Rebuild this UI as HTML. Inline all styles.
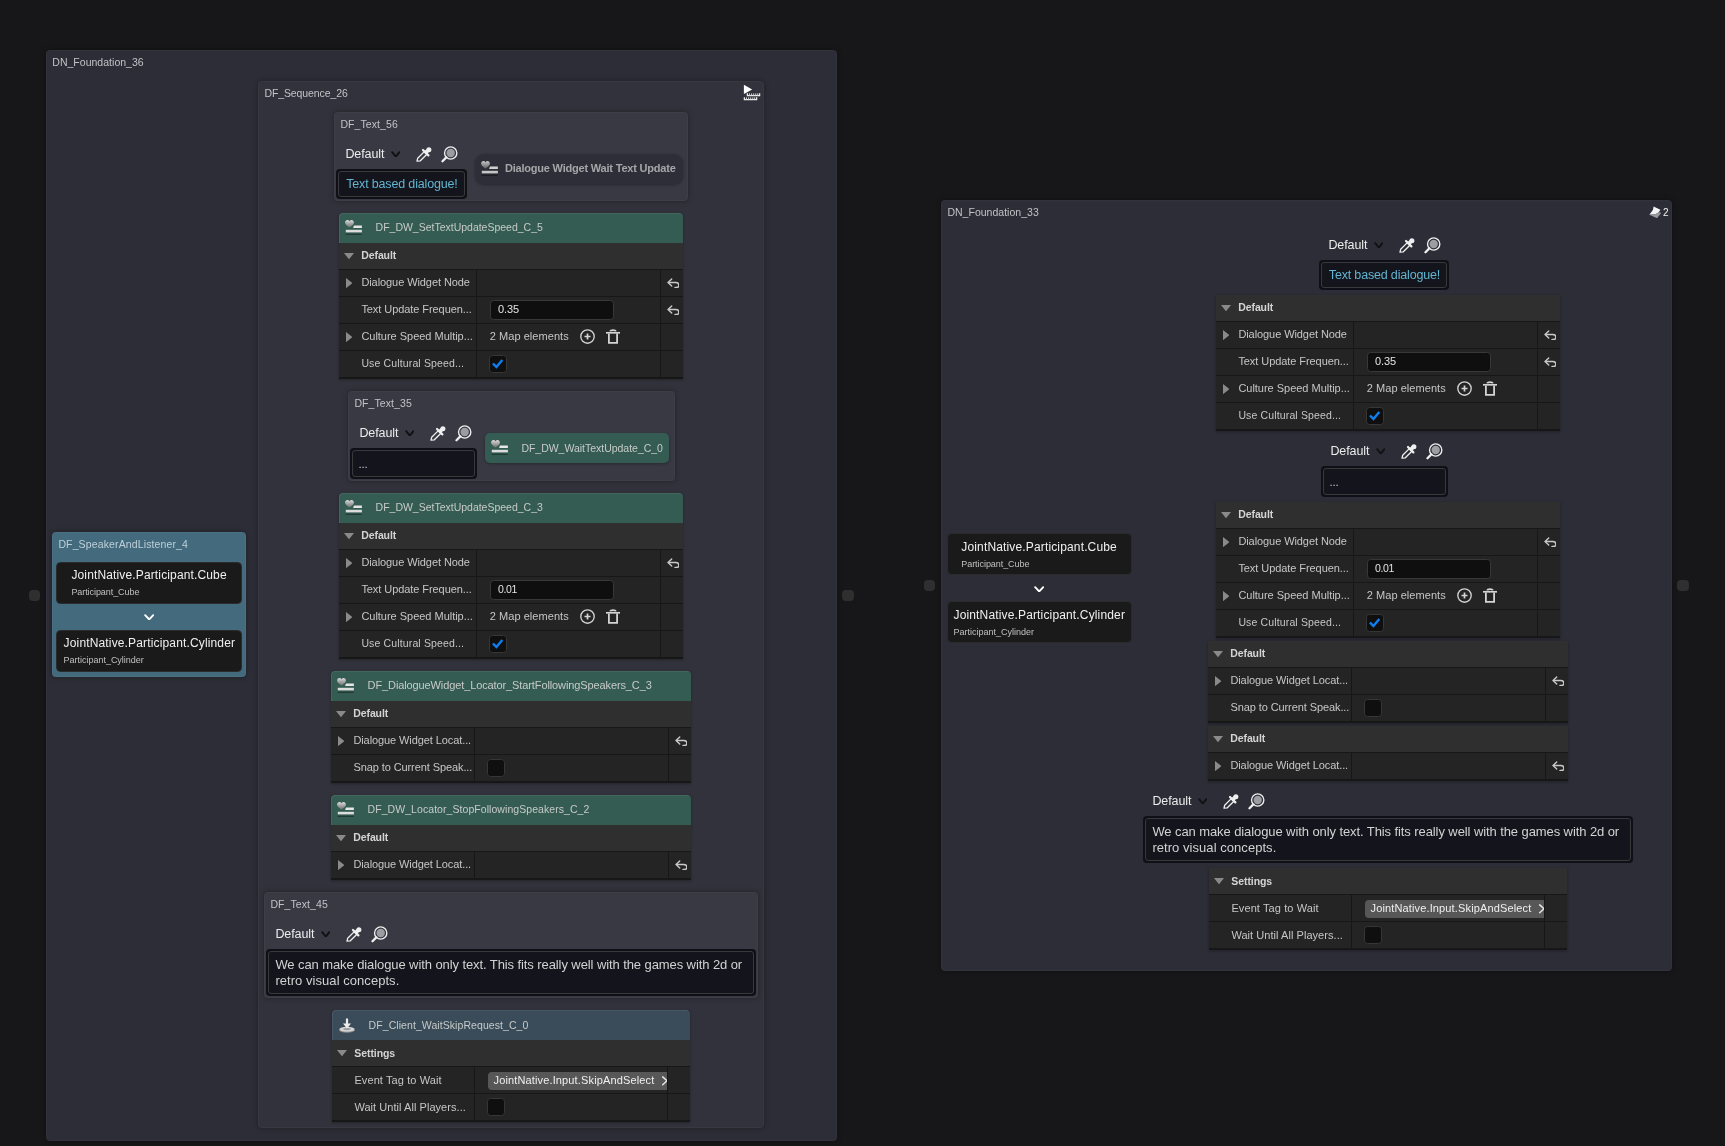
<!DOCTYPE html><html lang="en"><head><meta charset="utf-8"><title>Dialogue graph</title><style>
*{box-sizing:border-box;margin:0;padding:0}
html,body{width:1725px;height:1146px;overflow:hidden;background:#17171a}
body{position:relative;font-family:"Liberation Sans",Arial,sans-serif;color:#c4c4c4;font-size:11px}
#root{position:absolute;left:0;top:0;width:1725px;height:1146px;will-change:transform}
.abs{position:absolute}
.panel{position:absolute;border-radius:4px}
.t{position:absolute;white-space:nowrap;line-height:1}
.dp{position:absolute;background:#242424;overflow:hidden}
.dp .hd{position:absolute;left:0;right:0;top:0;height:30px}
.dp .cat{position:absolute;left:0;right:0;height:27px;background:#2f2f2f;border-bottom:1px solid #171717}
.dp .row{position:absolute;left:0;right:0;height:27px;background:#242424;border-bottom:1px solid #171717}
.dp .vd{position:absolute;width:1px;background:#171717}
.tb{position:absolute;background:#0f0f17;border-radius:4px}
.tb i{position:absolute;left:2px;top:2px;right:2px;bottom:2px;border:1px solid #39393b;border-radius:3px;background:#14141d;display:block}
.inp{position:absolute;background:#0f0f0f;border:1px solid #383838;border-radius:3.5px}
.chk{position:absolute;width:17.3px;height:17.3px;background:#0f0f0f;border:1px solid #363636;border-radius:3.5px}
.pin{position:absolute;height:11.3px;border-radius:4px;background:#2f2f30}
</style></head><body><div id="root">
<div class="pin" style="left:28.8px;top:589.9px;width:11.4px"></div>
<div class="pin" style="left:841.9px;top:589.9px;width:12.2px"></div>
<div class="pin" style="left:923.9px;top:579.9px;width:11.3px"></div>
<div class="pin" style="left:1677px;top:579.9px;width:12.1px"></div>
<div class="panel" style="left:46px;top:50px;width:791px;height:1091px;background:#2d2d37;border:1px solid #32323c;border-radius:3.5px;box-shadow:0 0 5px rgba(0,0,0,.35);"></div>
<div class="t" style="left:52.3px;top:57px;font-size:10.5px;color:#c2c2c6;letter-spacing:0.02px;">DN_Foundation_36</div>
<div class="panel" style="left:258px;top:81px;width:506px;height:1047px;background:#32323c;border:1px solid #383843;border-radius:3.5px;box-shadow:0 0 5px rgba(0,0,0,.35);"></div>
<div class="t" style="left:264.4px;top:88px;font-size:10.5px;color:#c2c2c6;letter-spacing:-0.09px;">DF_Sequence_26</div>
<svg class="abs" style="left:743px;top:84px;" width="18" height="17" viewBox="0 0 18 17"><path d="M0.9 0.8 L9.2 5.4 L0.9 10 Z" fill="#ffffff"/><path d="M4.4 9.2 V11.6 H16.6 V9.2" fill="none" stroke="#ececec" stroke-width="1.3"/><path d="M6.5 9.4 V11.6 M8.6 9.4 V11.6 M10.7 9.4 V11.6 M12.8 9.4 V11.6 M14.7 9.4 V11.6" stroke="#d0d0d0" stroke-width="1"/><path d="M1.4 13.2 V15.6 H13.6 V13.2" fill="none" stroke="#ececec" stroke-width="1.3"/><path d="M3.5 13.4 V15.6 M5.6 13.4 V15.6 M7.7 13.4 V15.6 M9.8 13.4 V15.6 M11.7 13.4 V15.6" stroke="#d0d0d0" stroke-width="1"/></svg>
<div class="panel" style="left:334px;top:112px;width:354px;height:89px;background:#393944;border:1px solid #3e3e49;border-radius:3.5px;box-shadow:0 0 5px rgba(0,0,0,.35);"></div>
<div class="t" style="left:340.4px;top:119px;font-size:10.5px;color:#c2c2c6;letter-spacing:0.09px;">DF_Text_56</div>
<div class="t" style="left:345.4px;top:148px;font-size:12.5px;color:#ececec;letter-spacing:-0.09px;">Default</div>
<svg class="abs" style="left:390.6px;top:150.6px;" width="9.6" height="6.8" viewBox="0 0 9.6 6.8"><path d="M1.2 1.2 L4.8 5.6 L8.4 1.2" fill="none" stroke="#111115" stroke-width="2" stroke-linecap="round" stroke-linejoin="round"/></svg>
<svg class="abs" style="left:416px;top:146.8px;" width="16" height="15" viewBox="0 0 16 15"><path d="M1 14.2 L1.7 11.2 L8.3 4.6 L10.9 7.2 L4.3 13.8 Z" fill="none" stroke="#efefef" stroke-width="1.3" stroke-linejoin="round"/><path d="M7 3 L12.4 8.4" stroke="#efefef" stroke-width="2.2" stroke-linecap="round"/><path d="M10.2 5.2 L12.4 3" stroke="#efefef" stroke-width="3.8" stroke-linecap="round"/><circle cx="12.9" cy="2.8" r="2.5" fill="#efefef"/></svg>
<svg class="abs" style="left:441.4px;top:145.8px;" width="17" height="17" viewBox="0 0 17 17"><circle cx="9.7" cy="7" r="6.15" fill="none" stroke="#efefef" stroke-width="1.35"/><circle cx="9.7" cy="7" r="4.2" fill="#9c9ca3"/><path d="M5.3 11.4 L1.5 15.2" stroke="#efefef" stroke-width="2.3" stroke-linecap="round"/></svg>
<div class="tb" style="left:336px;top:169px;width:131px;height:30px"><i></i></div>
<div class="t" style="left:346.2px;top:178px;font-size:12.5px;color:#62b5d0;letter-spacing:-0.16px;">Text based dialogue!</div>
<div class="abs" style="left:475px;top:154px;width:207.5px;height:29.6px;background:#2e2e38;border-radius:9px;box-shadow:0 1px 3px rgba(0,0,0,.32)"></div>
<svg class="abs" style="left:481px;top:161px;" width="17" height="16" viewBox="0 0 17 16"><defs><linearGradient id="hg1" x1="0" y1="0" x2="0" y2="1"><stop offset="0" stop-color="#c4c4c4"/><stop offset="1" stop-color="#616161"/></linearGradient></defs><path d="M4.5 7.6 C1.2 5.3 0.1 3.9 0.1 2.6 C0.1 1.1 1.2 0.1 2.4 0.1 C3.3 0.1 4 0.6 4.5 1.3 C5 0.6 5.7 0.1 6.6 0.1 C7.8 0.1 8.9 1.1 8.9 2.6 C8.9 3.9 7.8 5.3 4.5 7.6 Z" fill="url(#hg1)"/><path d="M8.9 5.6 H16.9 V7.9 H8.1 Z" fill="#cfcfcf"/><rect x="0.8" y="9.8" width="16.1" height="2.6" fill="#c6c6c6"/><rect x="0.5" y="13.7" width="16.2" height="1.3" fill="#000" fill-opacity=".36"/></svg>
<div class="t" style="left:504.9px;top:163px;font-size:11px;color:#a6a6a8;font-weight:700;letter-spacing:-0.2px;">Dialogue Widget Wait Text Update</div>
<div class="dp" style="left:339px;top:213px;width:344px;height:166px;border-radius:3px 3px 0 0;box-shadow:0 1px 3px rgba(0,0,0,.3)">
<div class="hd" style="background:#355c53;border-radius:3px 3px 0 0;box-shadow:inset 1px 1px 0 rgba(255,255,255,.07)"></div>
<div class="cat" style="top:30px"></div>
<div class="row" style="top:57px"></div>
<div class="row" style="top:84px"></div>
<div class="row" style="top:111px"></div>
<div class="row" style="top:138px"></div>
<div class="vd" style="left:137px;top:57px;height:108px"></div>
<div class="vd" style="left:321px;top:57px;height:108px"></div>
<div class="abs" style="left:0;right:0;bottom:0;height:2px;background:#171717"></div>
</div>
<svg class="abs" style="left:345.2px;top:220px;" width="17" height="16" viewBox="0 0 17 16"><defs><linearGradient id="hg2" x1="0" y1="0" x2="0" y2="1"><stop offset="0" stop-color="#dadada"/><stop offset="1" stop-color="#6c6c6c"/></linearGradient></defs><path d="M4.5 7.6 C1.2 5.3 0.1 3.9 0.1 2.6 C0.1 1.1 1.2 0.1 2.4 0.1 C3.3 0.1 4 0.6 4.5 1.3 C5 0.6 5.7 0.1 6.6 0.1 C7.8 0.1 8.9 1.1 8.9 2.6 C8.9 3.9 7.8 5.3 4.5 7.6 Z" fill="url(#hg2)"/><path d="M8.9 5.6 H16.9 V7.9 H8.1 Z" fill="#e6e6e6"/><rect x="0.8" y="9.8" width="16.1" height="2.6" fill="#dcdcdc"/><rect x="0.5" y="13.7" width="16.2" height="1.3" fill="#000" fill-opacity=".36"/></svg>
<div class="t" style="left:375.6px;top:222px;font-size:10.5px;color:#c6cac8;letter-spacing:-0.01px;">DF_DW_SetTextUpdateSpeed_C_5</div>
<svg class="abs" style="left:344px;top:253px;" width="10" height="6.3" viewBox="0 0 10 6.3"><path d="M0 0 H10 L5 6.3 Z" fill="#8a8a8a"/></svg>
<div class="t" style="left:361.3px;top:250px;font-size:10.5px;color:#d4d4d4;font-weight:700;letter-spacing:-0.11px;">Default</div>
<svg class="abs" style="left:345.8px;top:278px;" width="6.6" height="10.2" viewBox="0 0 6.6 10.2"><path d="M0 0 L6.6 5.1 L0 10.2 Z" fill="#8a8a8a"/></svg>
<div class="t" style="left:361.4px;top:277px;font-size:11px;color:#c6c6c6;letter-spacing:-0.08px;">Dialogue Widget Node</div>
<svg class="abs" style="left:666.7px;top:277.8px;" width="12.6" height="10.5" viewBox="0 0 12 10"><path d="M4.5 0.9 L1 4.3 L4.5 7.7" fill="none" stroke="#c8c8c8" stroke-width="1.35" stroke-linecap="round" stroke-linejoin="round"/><path d="M1.4 4.3 H8.2 C10.2 4.3 11.3 5.4 11.3 6.8 C11.3 8.2 10.2 9.1 8.6 9.1 H7.6" fill="none" stroke="#c8c8c8" stroke-width="1.35" stroke-linecap="round"/></svg>
<div class="t" style="left:361.4px;top:304px;font-size:11px;color:#c6c6c6;letter-spacing:-0.07px;">Text Update Frequen...</div>
<div class="inp" style="left:489.5px;top:300px;width:124.4px;height:19.6px"></div>
<div class="t" style="left:498px;top:304px;font-size:11px;color:#e4e4e4;letter-spacing:-0.1px;">0.35</div>
<svg class="abs" style="left:666.7px;top:304.8px;" width="12.6" height="10.5" viewBox="0 0 12 10"><path d="M4.5 0.9 L1 4.3 L4.5 7.7" fill="none" stroke="#c8c8c8" stroke-width="1.35" stroke-linecap="round" stroke-linejoin="round"/><path d="M1.4 4.3 H8.2 C10.2 4.3 11.3 5.4 11.3 6.8 C11.3 8.2 10.2 9.1 8.6 9.1 H7.6" fill="none" stroke="#c8c8c8" stroke-width="1.35" stroke-linecap="round"/></svg>
<svg class="abs" style="left:345.8px;top:332px;" width="6.6" height="10.2" viewBox="0 0 6.6 10.2"><path d="M0 0 L6.6 5.1 L0 10.2 Z" fill="#8a8a8a"/></svg>
<div class="t" style="left:361.4px;top:331px;font-size:11px;color:#c6c6c6;letter-spacing:-0.02px;">Culture Speed Multip...</div>
<div class="t" style="left:489.7px;top:331px;font-size:11px;color:#c6c6c6;letter-spacing:0.06px;">2 Map elements</div>
<svg class="abs" style="left:579.6px;top:329.3px;" width="15" height="15" viewBox="0 0 15 15"><circle cx="7.5" cy="7.5" r="6.7" fill="none" stroke="#d4d4d4" stroke-width="1.35"/><path d="M7.5 4.5 V10.5 M4.5 7.5 H10.5" stroke="#d4d4d4" stroke-width="1.7"/></svg>
<svg class="abs" style="left:606px;top:329px;" width="14" height="15" viewBox="0 0 14 15"><path d="M0 3.8 H14" stroke="#d4d4d4" stroke-width="1.7"/><path d="M4.3 2.4 C4.6 0.7 9.4 0.7 9.7 2.4" fill="none" stroke="#d4d4d4" stroke-width="1.7"/><path d="M2.9 4.4 V13.9 H11.1 V4.4" fill="none" stroke="#d4d4d4" stroke-width="1.8"/></svg>
<div class="t" style="left:361.4px;top:358px;font-size:10.5px;color:#c6c6c6;letter-spacing:0.14px;">Use Cultural Speed...</div>
<div class="chk" style="left:489.4px;top:355.4px"></div>
<svg class="abs" style="left:489.4px;top:355.4px;" width="17" height="17" viewBox="0 0 17 17"><path d="M3.9 8.5 L7.4 11.9 L13.3 4.9" fill="none" stroke="#0f7ff0" stroke-width="2.4"/></svg>
<div class="panel" style="left:348px;top:391px;width:327px;height:90px;background:#393944;border:1px solid #3e3e49;border-radius:3.5px;box-shadow:0 0 5px rgba(0,0,0,.35);"></div>
<div class="t" style="left:354.4px;top:398px;font-size:10.5px;color:#c2c2c6;letter-spacing:0.09px;">DF_Text_35</div>
<div class="t" style="left:359.4px;top:427px;font-size:12.5px;color:#ececec;letter-spacing:-0.09px;">Default</div>
<svg class="abs" style="left:404.6px;top:429.6px;" width="9.6" height="6.8" viewBox="0 0 9.6 6.8"><path d="M1.2 1.2 L4.8 5.6 L8.4 1.2" fill="none" stroke="#111115" stroke-width="2" stroke-linecap="round" stroke-linejoin="round"/></svg>
<svg class="abs" style="left:430px;top:425.8px;" width="16" height="15" viewBox="0 0 16 15"><path d="M1 14.2 L1.7 11.2 L8.3 4.6 L10.9 7.2 L4.3 13.8 Z" fill="none" stroke="#efefef" stroke-width="1.3" stroke-linejoin="round"/><path d="M7 3 L12.4 8.4" stroke="#efefef" stroke-width="2.2" stroke-linecap="round"/><path d="M10.2 5.2 L12.4 3" stroke="#efefef" stroke-width="3.8" stroke-linecap="round"/><circle cx="12.9" cy="2.8" r="2.5" fill="#efefef"/></svg>
<svg class="abs" style="left:455.4px;top:424.8px;" width="17" height="17" viewBox="0 0 17 17"><circle cx="9.7" cy="7" r="6.15" fill="none" stroke="#efefef" stroke-width="1.35"/><circle cx="9.7" cy="7" r="4.2" fill="#9c9ca3"/><path d="M5.3 11.4 L1.5 15.2" stroke="#efefef" stroke-width="2.3" stroke-linecap="round"/></svg>
<div class="tb" style="left:350px;top:448px;width:127px;height:31px"><i></i></div>
<div class="t" style="left:358.6px;top:459px;font-size:11.5px;color:#c8c8c8;letter-spacing:-0.2px;">...</div>
<div class="abs" style="left:485px;top:433px;width:184px;height:30px;background:#355c53;border-radius:5px;box-shadow:0 1px 3px rgba(0,0,0,.3)"></div>
<svg class="abs" style="left:490.9px;top:440px;" width="17" height="16" viewBox="0 0 17 16"><defs><linearGradient id="hg3" x1="0" y1="0" x2="0" y2="1"><stop offset="0" stop-color="#dadada"/><stop offset="1" stop-color="#6c6c6c"/></linearGradient></defs><path d="M4.5 7.6 C1.2 5.3 0.1 3.9 0.1 2.6 C0.1 1.1 1.2 0.1 2.4 0.1 C3.3 0.1 4 0.6 4.5 1.3 C5 0.6 5.7 0.1 6.6 0.1 C7.8 0.1 8.9 1.1 8.9 2.6 C8.9 3.9 7.8 5.3 4.5 7.6 Z" fill="url(#hg3)"/><path d="M8.9 5.6 H16.9 V7.9 H8.1 Z" fill="#e6e6e6"/><rect x="0.8" y="9.8" width="16.1" height="2.6" fill="#dcdcdc"/><rect x="0.5" y="13.7" width="16.2" height="1.3" fill="#000" fill-opacity=".36"/></svg>
<div class="t" style="left:521.4px;top:443px;font-size:10.5px;color:#c6cac8;letter-spacing:-0.02px;">DF_DW_WaitTextUpdate_C_0</div>
<div class="dp" style="left:339px;top:493px;width:344px;height:166px;border-radius:3px 3px 0 0;box-shadow:0 1px 3px rgba(0,0,0,.3)">
<div class="hd" style="background:#355c53;border-radius:3px 3px 0 0;box-shadow:inset 1px 1px 0 rgba(255,255,255,.07)"></div>
<div class="cat" style="top:30px"></div>
<div class="row" style="top:57px"></div>
<div class="row" style="top:84px"></div>
<div class="row" style="top:111px"></div>
<div class="row" style="top:138px"></div>
<div class="vd" style="left:137px;top:57px;height:108px"></div>
<div class="vd" style="left:321px;top:57px;height:108px"></div>
<div class="abs" style="left:0;right:0;bottom:0;height:2px;background:#171717"></div>
</div>
<svg class="abs" style="left:345.2px;top:500px;" width="17" height="16" viewBox="0 0 17 16"><defs><linearGradient id="hg4" x1="0" y1="0" x2="0" y2="1"><stop offset="0" stop-color="#dadada"/><stop offset="1" stop-color="#6c6c6c"/></linearGradient></defs><path d="M4.5 7.6 C1.2 5.3 0.1 3.9 0.1 2.6 C0.1 1.1 1.2 0.1 2.4 0.1 C3.3 0.1 4 0.6 4.5 1.3 C5 0.6 5.7 0.1 6.6 0.1 C7.8 0.1 8.9 1.1 8.9 2.6 C8.9 3.9 7.8 5.3 4.5 7.6 Z" fill="url(#hg4)"/><path d="M8.9 5.6 H16.9 V7.9 H8.1 Z" fill="#e6e6e6"/><rect x="0.8" y="9.8" width="16.1" height="2.6" fill="#dcdcdc"/><rect x="0.5" y="13.7" width="16.2" height="1.3" fill="#000" fill-opacity=".36"/></svg>
<div class="t" style="left:375.6px;top:502px;font-size:10.5px;color:#c6cac8;letter-spacing:-0.01px;">DF_DW_SetTextUpdateSpeed_C_3</div>
<svg class="abs" style="left:344px;top:533px;" width="10" height="6.3" viewBox="0 0 10 6.3"><path d="M0 0 H10 L5 6.3 Z" fill="#8a8a8a"/></svg>
<div class="t" style="left:361.3px;top:530px;font-size:10.5px;color:#d4d4d4;font-weight:700;letter-spacing:-0.11px;">Default</div>
<svg class="abs" style="left:345.8px;top:558px;" width="6.6" height="10.2" viewBox="0 0 6.6 10.2"><path d="M0 0 L6.6 5.1 L0 10.2 Z" fill="#8a8a8a"/></svg>
<div class="t" style="left:361.4px;top:557px;font-size:11px;color:#c6c6c6;letter-spacing:-0.08px;">Dialogue Widget Node</div>
<svg class="abs" style="left:666.7px;top:557.8px;" width="12.6" height="10.5" viewBox="0 0 12 10"><path d="M4.5 0.9 L1 4.3 L4.5 7.7" fill="none" stroke="#c8c8c8" stroke-width="1.35" stroke-linecap="round" stroke-linejoin="round"/><path d="M1.4 4.3 H8.2 C10.2 4.3 11.3 5.4 11.3 6.8 C11.3 8.2 10.2 9.1 8.6 9.1 H7.6" fill="none" stroke="#c8c8c8" stroke-width="1.35" stroke-linecap="round"/></svg>
<div class="t" style="left:361.4px;top:584px;font-size:11px;color:#c6c6c6;letter-spacing:-0.07px;">Text Update Frequen...</div>
<div class="inp" style="left:489.5px;top:580px;width:124.4px;height:19.6px"></div>
<div class="t" style="left:498px;top:584px;font-size:10.5px;color:#e4e4e4;letter-spacing:-0.33px;">0.01</div>
<svg class="abs" style="left:345.8px;top:612px;" width="6.6" height="10.2" viewBox="0 0 6.6 10.2"><path d="M0 0 L6.6 5.1 L0 10.2 Z" fill="#8a8a8a"/></svg>
<div class="t" style="left:361.4px;top:611px;font-size:11px;color:#c6c6c6;letter-spacing:-0.02px;">Culture Speed Multip...</div>
<div class="t" style="left:489.7px;top:611px;font-size:11px;color:#c6c6c6;letter-spacing:0.06px;">2 Map elements</div>
<svg class="abs" style="left:579.6px;top:609.3px;" width="15" height="15" viewBox="0 0 15 15"><circle cx="7.5" cy="7.5" r="6.7" fill="none" stroke="#d4d4d4" stroke-width="1.35"/><path d="M7.5 4.5 V10.5 M4.5 7.5 H10.5" stroke="#d4d4d4" stroke-width="1.7"/></svg>
<svg class="abs" style="left:606px;top:609px;" width="14" height="15" viewBox="0 0 14 15"><path d="M0 3.8 H14" stroke="#d4d4d4" stroke-width="1.7"/><path d="M4.3 2.4 C4.6 0.7 9.4 0.7 9.7 2.4" fill="none" stroke="#d4d4d4" stroke-width="1.7"/><path d="M2.9 4.4 V13.9 H11.1 V4.4" fill="none" stroke="#d4d4d4" stroke-width="1.8"/></svg>
<div class="t" style="left:361.4px;top:638px;font-size:10.5px;color:#c6c6c6;letter-spacing:0.14px;">Use Cultural Speed...</div>
<div class="chk" style="left:489.4px;top:635.4px"></div>
<svg class="abs" style="left:489.4px;top:635.4px;" width="17" height="17" viewBox="0 0 17 17"><path d="M3.9 8.5 L7.4 11.9 L13.3 4.9" fill="none" stroke="#0f7ff0" stroke-width="2.4"/></svg>
<div class="dp" style="left:331px;top:671px;width:360px;height:112px;border-radius:3px 3px 0 0;box-shadow:0 1px 3px rgba(0,0,0,.3)">
<div class="hd" style="background:#355c53;border-radius:3px 3px 0 0;box-shadow:inset 1px 1px 0 rgba(255,255,255,.07)"></div>
<div class="cat" style="top:30px"></div>
<div class="row" style="top:57px"></div>
<div class="row" style="top:84px"></div>
<div class="vd" style="left:143px;top:57px;height:54px"></div>
<div class="vd" style="left:337px;top:57px;height:54px"></div>
<div class="abs" style="left:0;right:0;bottom:0;height:2px;background:#171717"></div>
</div>
<svg class="abs" style="left:337.2px;top:678px;" width="17" height="16" viewBox="0 0 17 16"><defs><linearGradient id="hg5" x1="0" y1="0" x2="0" y2="1"><stop offset="0" stop-color="#dadada"/><stop offset="1" stop-color="#6c6c6c"/></linearGradient></defs><path d="M4.5 7.6 C1.2 5.3 0.1 3.9 0.1 2.6 C0.1 1.1 1.2 0.1 2.4 0.1 C3.3 0.1 4 0.6 4.5 1.3 C5 0.6 5.7 0.1 6.6 0.1 C7.8 0.1 8.9 1.1 8.9 2.6 C8.9 3.9 7.8 5.3 4.5 7.6 Z" fill="url(#hg5)"/><path d="M8.9 5.6 H16.9 V7.9 H8.1 Z" fill="#e6e6e6"/><rect x="0.8" y="9.8" width="16.1" height="2.6" fill="#dcdcdc"/><rect x="0.5" y="13.7" width="16.2" height="1.3" fill="#000" fill-opacity=".36"/></svg>
<div class="t" style="left:367.6px;top:680px;font-size:11px;color:#c6cac8;letter-spacing:-0.11px;">DF_DialogueWidget_Locator_StartFollowingSpeakers_C_3</div>
<svg class="abs" style="left:336px;top:711px;" width="10" height="6.3" viewBox="0 0 10 6.3"><path d="M0 0 H10 L5 6.3 Z" fill="#8a8a8a"/></svg>
<div class="t" style="left:353.3px;top:708px;font-size:10.5px;color:#d4d4d4;font-weight:700;letter-spacing:-0.11px;">Default</div>
<svg class="abs" style="left:337.8px;top:736px;" width="6.6" height="10.2" viewBox="0 0 6.6 10.2"><path d="M0 0 L6.6 5.1 L0 10.2 Z" fill="#8a8a8a"/></svg>
<div class="t" style="left:353.4px;top:735px;font-size:11px;color:#c6c6c6;letter-spacing:-0.09px;">Dialogue Widget Locat...</div>
<svg class="abs" style="left:674.7px;top:735.8px;" width="12.6" height="10.5" viewBox="0 0 12 10"><path d="M4.5 0.9 L1 4.3 L4.5 7.7" fill="none" stroke="#c8c8c8" stroke-width="1.35" stroke-linecap="round" stroke-linejoin="round"/><path d="M1.4 4.3 H8.2 C10.2 4.3 11.3 5.4 11.3 6.8 C11.3 8.2 10.2 9.1 8.6 9.1 H7.6" fill="none" stroke="#c8c8c8" stroke-width="1.35" stroke-linecap="round"/></svg>
<div class="t" style="left:353.4px;top:762px;font-size:11px;color:#c6c6c6;letter-spacing:-0.09px;">Snap to Current Speak...</div>
<div class="chk" style="left:487.4px;top:759.4px"></div>
<div class="dp" style="left:331px;top:795px;width:360px;height:85px;border-radius:3px 3px 0 0;box-shadow:0 1px 3px rgba(0,0,0,.3)">
<div class="hd" style="background:#355c53;border-radius:3px 3px 0 0;box-shadow:inset 1px 1px 0 rgba(255,255,255,.07)"></div>
<div class="cat" style="top:30px"></div>
<div class="row" style="top:57px"></div>
<div class="vd" style="left:143px;top:57px;height:27px"></div>
<div class="vd" style="left:337px;top:57px;height:27px"></div>
<div class="abs" style="left:0;right:0;bottom:0;height:2px;background:#171717"></div>
</div>
<svg class="abs" style="left:337.2px;top:802px;" width="17" height="16" viewBox="0 0 17 16"><defs><linearGradient id="hg6" x1="0" y1="0" x2="0" y2="1"><stop offset="0" stop-color="#dadada"/><stop offset="1" stop-color="#6c6c6c"/></linearGradient></defs><path d="M4.5 7.6 C1.2 5.3 0.1 3.9 0.1 2.6 C0.1 1.1 1.2 0.1 2.4 0.1 C3.3 0.1 4 0.6 4.5 1.3 C5 0.6 5.7 0.1 6.6 0.1 C7.8 0.1 8.9 1.1 8.9 2.6 C8.9 3.9 7.8 5.3 4.5 7.6 Z" fill="url(#hg6)"/><path d="M8.9 5.6 H16.9 V7.9 H8.1 Z" fill="#e6e6e6"/><rect x="0.8" y="9.8" width="16.1" height="2.6" fill="#dcdcdc"/><rect x="0.5" y="13.7" width="16.2" height="1.3" fill="#000" fill-opacity=".36"/></svg>
<div class="t" style="left:367.6px;top:804px;font-size:10.5px;color:#c6cac8;letter-spacing:0.06px;">DF_DW_Locator_StopFollowingSpeakers_C_2</div>
<svg class="abs" style="left:336px;top:835px;" width="10" height="6.3" viewBox="0 0 10 6.3"><path d="M0 0 H10 L5 6.3 Z" fill="#8a8a8a"/></svg>
<div class="t" style="left:353.3px;top:832px;font-size:10.5px;color:#d4d4d4;font-weight:700;letter-spacing:-0.11px;">Default</div>
<svg class="abs" style="left:337.8px;top:860px;" width="6.6" height="10.2" viewBox="0 0 6.6 10.2"><path d="M0 0 L6.6 5.1 L0 10.2 Z" fill="#8a8a8a"/></svg>
<div class="t" style="left:353.4px;top:859px;font-size:11px;color:#c6c6c6;letter-spacing:-0.09px;">Dialogue Widget Locat...</div>
<svg class="abs" style="left:674.7px;top:859.8px;" width="12.6" height="10.5" viewBox="0 0 12 10"><path d="M4.5 0.9 L1 4.3 L4.5 7.7" fill="none" stroke="#c8c8c8" stroke-width="1.35" stroke-linecap="round" stroke-linejoin="round"/><path d="M1.4 4.3 H8.2 C10.2 4.3 11.3 5.4 11.3 6.8 C11.3 8.2 10.2 9.1 8.6 9.1 H7.6" fill="none" stroke="#c8c8c8" stroke-width="1.35" stroke-linecap="round"/></svg>
<div class="panel" style="left:264px;top:892px;width:494px;height:106px;background:#393944;border:1px solid #3e3e49;border-radius:3.5px;box-shadow:0 0 5px rgba(0,0,0,.35);"></div>
<div class="t" style="left:270.4px;top:899px;font-size:10.5px;color:#c2c2c6;letter-spacing:0.09px;">DF_Text_45</div>
<div class="t" style="left:275.4px;top:928px;font-size:12.5px;color:#ececec;letter-spacing:-0.09px;">Default</div>
<svg class="abs" style="left:320.6px;top:930.6px;" width="9.6" height="6.8" viewBox="0 0 9.6 6.8"><path d="M1.2 1.2 L4.8 5.6 L8.4 1.2" fill="none" stroke="#111115" stroke-width="2" stroke-linecap="round" stroke-linejoin="round"/></svg>
<svg class="abs" style="left:346px;top:926.8px;" width="16" height="15" viewBox="0 0 16 15"><path d="M1 14.2 L1.7 11.2 L8.3 4.6 L10.9 7.2 L4.3 13.8 Z" fill="none" stroke="#efefef" stroke-width="1.3" stroke-linejoin="round"/><path d="M7 3 L12.4 8.4" stroke="#efefef" stroke-width="2.2" stroke-linecap="round"/><path d="M10.2 5.2 L12.4 3" stroke="#efefef" stroke-width="3.8" stroke-linecap="round"/><circle cx="12.9" cy="2.8" r="2.5" fill="#efefef"/></svg>
<svg class="abs" style="left:371.4px;top:925.8px;" width="17" height="17" viewBox="0 0 17 17"><circle cx="9.7" cy="7" r="6.15" fill="none" stroke="#efefef" stroke-width="1.35"/><circle cx="9.7" cy="7" r="4.2" fill="#9c9ca3"/><path d="M5.3 11.4 L1.5 15.2" stroke="#efefef" stroke-width="2.3" stroke-linecap="round"/></svg>
<div class="tb" style="left:266px;top:949px;width:490px;height:46.7px"><i></i></div>
<div class="t" style="left:275.4px;top:958px;font-size:13px;color:#d2d2d2;letter-spacing:-0.09px;">We can make dialogue with only text. This fits really well with the games with 2d or</div>
<div class="t" style="left:275.4px;top:974px;font-size:13px;color:#d2d2d2;letter-spacing:0.05px;">retro visual concepts.</div>
<div class="dp" style="left:332px;top:1010px;width:358px;height:112px;border-radius:3px 3px 0 0;box-shadow:0 1px 3px rgba(0,0,0,.3)">
<div class="hd" style="background:#3a4c5a;border-radius:3px 3px 0 0;box-shadow:inset 1px 1px 0 rgba(255,255,255,.07)"></div>
<div class="cat" style="top:30px"></div>
<div class="row" style="top:57px"></div>
<div class="row" style="top:84px"></div>
<div class="vd" style="left:142px;top:57px;height:54px"></div>
<div class="vd" style="left:335px;top:57px;height:54px"></div>
<div class="abs" style="left:0;right:0;bottom:0;height:2px;background:#171717"></div>
</div>
<svg class="abs" style="left:339px;top:1017.6px;" width="16" height="15" viewBox="0 0 16 15"><ellipse cx="8" cy="12.2" rx="7.6" ry="2.6" fill="#8e8e8e"/><ellipse cx="8" cy="11.2" rx="7.6" ry="2.5" fill="#d4d4d4"/><ellipse cx="8" cy="11.1" rx="3.6" ry="1.1" fill="#9a9a9a"/><path d="M6.9 0.4 H9.1 V5.6 H12 L8 10.6 L4 5.6 H6.9 Z" fill="#ececec"/></svg>
<div class="t" style="left:368.6px;top:1020px;font-size:10.5px;color:#c6cac8;letter-spacing:0.07px;">DF_Client_WaitSkipRequest_C_0</div>
<svg class="abs" style="left:337px;top:1050px;" width="10" height="6.3" viewBox="0 0 10 6.3"><path d="M0 0 H10 L5 6.3 Z" fill="#8a8a8a"/></svg>
<div class="t" style="left:354.3px;top:1048px;font-size:10.5px;color:#d4d4d4;font-weight:700;letter-spacing:-0.08px;">Settings</div>
<div class="t" style="left:354.4px;top:1075px;font-size:11px;color:#c6c6c6;letter-spacing:0.1px;">Event Tag to Wait</div>
<div class="abs" style="left:488px;top:1072px;width:179px;height:18px;background:#575757;border-radius:4px 0 0 4px"></div>
<div class="t" style="left:493.5px;top:1075px;font-size:11px;color:#f0f0f0;letter-spacing:0.14px;">JointNative.Input.SkipAndSelect</div>
<svg class="abs" style="left:660.8px;top:1076.4px;" width="6.2" height="9.6" viewBox="0 0 6.2 9.6"><path d="M1.7 0.9 L6 4.8 L1.7 8.7" fill="none" stroke="#e6e6e6" stroke-width="1.5" stroke-linecap="round" stroke-linejoin="round"/></svg>
<div class="t" style="left:354.4px;top:1102px;font-size:11px;color:#c6c6c6;letter-spacing:0.05px;">Wait Until All Players...</div>
<div class="chk" style="left:487.4px;top:1098.4px"></div>
<div class="panel" style="left:52px;top:532px;width:194px;height:145px;background:#446b7d;border:1px solid #4a7183;border-radius:3.5px;box-shadow:0 0 5px rgba(0,0,0,.35);"></div>
<div class="t" style="left:58.4px;top:539px;font-size:10.5px;color:#bdd0d8;letter-spacing:0.13px;">DF_SpeakerAndListener_4</div>
<div class="abs" style="left:56px;top:561.5px;width:186px;height:42px;background:#1a1a1a;border-radius:4.5px;border:1px solid #2b2b2b;"></div>
<div class="t" style="left:71.4px;top:569px;font-size:12px;color:#f0f0f0;letter-spacing:0.14px;">JointNative.Participant.Cube</div>
<div class="t" style="left:71.4px;top:588px;font-size:9px;color:#c0c0c0;letter-spacing:-0.07px;">Participant_Cube</div>
<svg class="abs" style="left:143.8px;top:613.8px;" width="10.4" height="6.6" viewBox="0 0 10.4 6.6"><path d="M1.15 1.15 L5.2 5.449999999999999 L9.250000000000002 1.15" fill="none" stroke="#ffffff" stroke-width="1.9" stroke-linecap="round" stroke-linejoin="round"/></svg>
<div class="abs" style="left:56px;top:629.5px;width:186px;height:42px;background:#1a1a1a;border-radius:4.5px;border:1px solid #2b2b2b;"></div>
<div class="t" style="left:63.6px;top:637px;font-size:12px;color:#f0f0f0;letter-spacing:0.15px;">JointNative.Participant.Cylinder</div>
<div class="t" style="left:63.6px;top:656px;font-size:9px;color:#c0c0c0;letter-spacing:-0.02px;">Participant_Cylinder</div>
<div class="panel" style="left:941px;top:200px;width:731px;height:771px;background:#2d2d37;border:1px solid #32323c;border-radius:3.5px;box-shadow:0 0 5px rgba(0,0,0,.35);"></div>
<div class="t" style="left:947.4px;top:207px;font-size:10.5px;color:#c2c2c6;letter-spacing:0.02px;">DN_Foundation_33</div>
<svg class="abs" style="left:1648.6px;top:205.8px;" width="12.6" height="12.6" viewBox="0 0 12.6 12.6"><path d="M4.6 0.4 L11.4 3.7 L9.8 6.3 L6.5 8.2 L0.4 8.7 L4 3.8 Z" fill="#f4f4f4"/><path d="M0.4 8.7 L6.5 8.2 L9.8 6.3 L12.2 6.9 L8 12.2 Z" fill="#9a9a9e"/></svg>
<div class="t" style="left:1663.1px;top:208px;font-size:10px;color:#f2f2f2;">2</div>
<div class="t" style="left:1328.4px;top:239px;font-size:12.5px;color:#ececec;letter-spacing:-0.09px;">Default</div>
<svg class="abs" style="left:1373.6px;top:241.6px;" width="9.6" height="6.8" viewBox="0 0 9.6 6.8"><path d="M1.2 1.2 L4.8 5.6 L8.4 1.2" fill="none" stroke="#111115" stroke-width="2" stroke-linecap="round" stroke-linejoin="round"/></svg>
<svg class="abs" style="left:1399px;top:237.8px;" width="16" height="15" viewBox="0 0 16 15"><path d="M1 14.2 L1.7 11.2 L8.3 4.6 L10.9 7.2 L4.3 13.8 Z" fill="none" stroke="#efefef" stroke-width="1.3" stroke-linejoin="round"/><path d="M7 3 L12.4 8.4" stroke="#efefef" stroke-width="2.2" stroke-linecap="round"/><path d="M10.2 5.2 L12.4 3" stroke="#efefef" stroke-width="3.8" stroke-linecap="round"/><circle cx="12.9" cy="2.8" r="2.5" fill="#efefef"/></svg>
<svg class="abs" style="left:1424.4px;top:236.8px;" width="17" height="17" viewBox="0 0 17 17"><circle cx="9.7" cy="7" r="6.15" fill="none" stroke="#efefef" stroke-width="1.35"/><circle cx="9.7" cy="7" r="4.2" fill="#9c9ca3"/><path d="M5.3 11.4 L1.5 15.2" stroke="#efefef" stroke-width="2.3" stroke-linecap="round"/></svg>
<div class="tb" style="left:1319px;top:260px;width:130px;height:30px"><i></i></div>
<div class="t" style="left:1328.8px;top:269px;font-size:12.5px;color:#62b5d0;letter-spacing:-0.17px;">Text based dialogue!</div>
<div class="dp" style="left:1216px;top:295px;width:344px;height:136px;border-radius:0;box-shadow:0 1px 3px rgba(0,0,0,.3)">
<div class="cat" style="top:0px"></div>
<div class="row" style="top:27px"></div>
<div class="row" style="top:54px"></div>
<div class="row" style="top:81px"></div>
<div class="row" style="top:108px"></div>
<div class="vd" style="left:137px;top:27px;height:108px"></div>
<div class="vd" style="left:321px;top:27px;height:108px"></div>
<div class="abs" style="left:0;right:0;bottom:0;height:2px;background:#171717"></div>
</div>
<svg class="abs" style="left:1221px;top:305px;" width="10" height="6.3" viewBox="0 0 10 6.3"><path d="M0 0 H10 L5 6.3 Z" fill="#8a8a8a"/></svg>
<div class="t" style="left:1238.3px;top:302px;font-size:10.5px;color:#d4d4d4;font-weight:700;letter-spacing:-0.11px;">Default</div>
<svg class="abs" style="left:1222.8px;top:330px;" width="6.6" height="10.2" viewBox="0 0 6.6 10.2"><path d="M0 0 L6.6 5.1 L0 10.2 Z" fill="#8a8a8a"/></svg>
<div class="t" style="left:1238.4px;top:329px;font-size:11px;color:#c6c6c6;letter-spacing:-0.08px;">Dialogue Widget Node</div>
<svg class="abs" style="left:1543.7px;top:329.8px;" width="12.6" height="10.5" viewBox="0 0 12 10"><path d="M4.5 0.9 L1 4.3 L4.5 7.7" fill="none" stroke="#c8c8c8" stroke-width="1.35" stroke-linecap="round" stroke-linejoin="round"/><path d="M1.4 4.3 H8.2 C10.2 4.3 11.3 5.4 11.3 6.8 C11.3 8.2 10.2 9.1 8.6 9.1 H7.6" fill="none" stroke="#c8c8c8" stroke-width="1.35" stroke-linecap="round"/></svg>
<div class="t" style="left:1238.4px;top:356px;font-size:11px;color:#c6c6c6;letter-spacing:-0.07px;">Text Update Frequen...</div>
<div class="inp" style="left:1366.5px;top:352px;width:124.4px;height:19.6px"></div>
<div class="t" style="left:1375px;top:356px;font-size:11px;color:#e4e4e4;letter-spacing:-0.1px;">0.35</div>
<svg class="abs" style="left:1543.7px;top:356.8px;" width="12.6" height="10.5" viewBox="0 0 12 10"><path d="M4.5 0.9 L1 4.3 L4.5 7.7" fill="none" stroke="#c8c8c8" stroke-width="1.35" stroke-linecap="round" stroke-linejoin="round"/><path d="M1.4 4.3 H8.2 C10.2 4.3 11.3 5.4 11.3 6.8 C11.3 8.2 10.2 9.1 8.6 9.1 H7.6" fill="none" stroke="#c8c8c8" stroke-width="1.35" stroke-linecap="round"/></svg>
<svg class="abs" style="left:1222.8px;top:384px;" width="6.6" height="10.2" viewBox="0 0 6.6 10.2"><path d="M0 0 L6.6 5.1 L0 10.2 Z" fill="#8a8a8a"/></svg>
<div class="t" style="left:1238.4px;top:383px;font-size:11px;color:#c6c6c6;letter-spacing:-0.02px;">Culture Speed Multip...</div>
<div class="t" style="left:1366.7px;top:383px;font-size:11px;color:#c6c6c6;letter-spacing:0.06px;">2 Map elements</div>
<svg class="abs" style="left:1456.6px;top:381.3px;" width="15" height="15" viewBox="0 0 15 15"><circle cx="7.5" cy="7.5" r="6.7" fill="none" stroke="#d4d4d4" stroke-width="1.35"/><path d="M7.5 4.5 V10.5 M4.5 7.5 H10.5" stroke="#d4d4d4" stroke-width="1.7"/></svg>
<svg class="abs" style="left:1483px;top:381px;" width="14" height="15" viewBox="0 0 14 15"><path d="M0 3.8 H14" stroke="#d4d4d4" stroke-width="1.7"/><path d="M4.3 2.4 C4.6 0.7 9.4 0.7 9.7 2.4" fill="none" stroke="#d4d4d4" stroke-width="1.7"/><path d="M2.9 4.4 V13.9 H11.1 V4.4" fill="none" stroke="#d4d4d4" stroke-width="1.8"/></svg>
<div class="t" style="left:1238.4px;top:410px;font-size:10.5px;color:#c6c6c6;letter-spacing:0.14px;">Use Cultural Speed...</div>
<div class="chk" style="left:1366.4px;top:407.4px"></div>
<svg class="abs" style="left:1366.4px;top:407.4px;" width="17" height="17" viewBox="0 0 17 17"><path d="M3.9 8.5 L7.4 11.9 L13.3 4.9" fill="none" stroke="#0f7ff0" stroke-width="2.4"/></svg>
<div class="t" style="left:1330.4px;top:445px;font-size:12.5px;color:#ececec;letter-spacing:-0.09px;">Default</div>
<svg class="abs" style="left:1375.6px;top:447.6px;" width="9.6" height="6.8" viewBox="0 0 9.6 6.8"><path d="M1.2 1.2 L4.8 5.6 L8.4 1.2" fill="none" stroke="#111115" stroke-width="2" stroke-linecap="round" stroke-linejoin="round"/></svg>
<svg class="abs" style="left:1401px;top:443.8px;" width="16" height="15" viewBox="0 0 16 15"><path d="M1 14.2 L1.7 11.2 L8.3 4.6 L10.9 7.2 L4.3 13.8 Z" fill="none" stroke="#efefef" stroke-width="1.3" stroke-linejoin="round"/><path d="M7 3 L12.4 8.4" stroke="#efefef" stroke-width="2.2" stroke-linecap="round"/><path d="M10.2 5.2 L12.4 3" stroke="#efefef" stroke-width="3.8" stroke-linecap="round"/><circle cx="12.9" cy="2.8" r="2.5" fill="#efefef"/></svg>
<svg class="abs" style="left:1426.4px;top:442.8px;" width="17" height="17" viewBox="0 0 17 17"><circle cx="9.7" cy="7" r="6.15" fill="none" stroke="#efefef" stroke-width="1.35"/><circle cx="9.7" cy="7" r="4.2" fill="#9c9ca3"/><path d="M5.3 11.4 L1.5 15.2" stroke="#efefef" stroke-width="2.3" stroke-linecap="round"/></svg>
<div class="tb" style="left:1321px;top:466px;width:127px;height:31px"><i></i></div>
<div class="t" style="left:1329.6px;top:477px;font-size:11.5px;color:#c8c8c8;letter-spacing:-0.2px;">...</div>
<div class="dp" style="left:1216px;top:502px;width:344px;height:136px;border-radius:0;box-shadow:0 1px 3px rgba(0,0,0,.3)">
<div class="cat" style="top:0px"></div>
<div class="row" style="top:27px"></div>
<div class="row" style="top:54px"></div>
<div class="row" style="top:81px"></div>
<div class="row" style="top:108px"></div>
<div class="vd" style="left:137px;top:27px;height:108px"></div>
<div class="vd" style="left:321px;top:27px;height:108px"></div>
<div class="abs" style="left:0;right:0;bottom:0;height:2px;background:#171717"></div>
</div>
<svg class="abs" style="left:1221px;top:512px;" width="10" height="6.3" viewBox="0 0 10 6.3"><path d="M0 0 H10 L5 6.3 Z" fill="#8a8a8a"/></svg>
<div class="t" style="left:1238.3px;top:509px;font-size:10.5px;color:#d4d4d4;font-weight:700;letter-spacing:-0.11px;">Default</div>
<svg class="abs" style="left:1222.8px;top:537px;" width="6.6" height="10.2" viewBox="0 0 6.6 10.2"><path d="M0 0 L6.6 5.1 L0 10.2 Z" fill="#8a8a8a"/></svg>
<div class="t" style="left:1238.4px;top:536px;font-size:11px;color:#c6c6c6;letter-spacing:-0.08px;">Dialogue Widget Node</div>
<svg class="abs" style="left:1543.7px;top:536.8px;" width="12.6" height="10.5" viewBox="0 0 12 10"><path d="M4.5 0.9 L1 4.3 L4.5 7.7" fill="none" stroke="#c8c8c8" stroke-width="1.35" stroke-linecap="round" stroke-linejoin="round"/><path d="M1.4 4.3 H8.2 C10.2 4.3 11.3 5.4 11.3 6.8 C11.3 8.2 10.2 9.1 8.6 9.1 H7.6" fill="none" stroke="#c8c8c8" stroke-width="1.35" stroke-linecap="round"/></svg>
<div class="t" style="left:1238.4px;top:563px;font-size:11px;color:#c6c6c6;letter-spacing:-0.07px;">Text Update Frequen...</div>
<div class="inp" style="left:1366.5px;top:559px;width:124.4px;height:19.6px"></div>
<div class="t" style="left:1375px;top:563px;font-size:10.5px;color:#e4e4e4;letter-spacing:-0.33px;">0.01</div>
<svg class="abs" style="left:1222.8px;top:591px;" width="6.6" height="10.2" viewBox="0 0 6.6 10.2"><path d="M0 0 L6.6 5.1 L0 10.2 Z" fill="#8a8a8a"/></svg>
<div class="t" style="left:1238.4px;top:590px;font-size:11px;color:#c6c6c6;letter-spacing:-0.02px;">Culture Speed Multip...</div>
<div class="t" style="left:1366.7px;top:590px;font-size:11px;color:#c6c6c6;letter-spacing:0.06px;">2 Map elements</div>
<svg class="abs" style="left:1456.6px;top:588.3px;" width="15" height="15" viewBox="0 0 15 15"><circle cx="7.5" cy="7.5" r="6.7" fill="none" stroke="#d4d4d4" stroke-width="1.35"/><path d="M7.5 4.5 V10.5 M4.5 7.5 H10.5" stroke="#d4d4d4" stroke-width="1.7"/></svg>
<svg class="abs" style="left:1483px;top:588px;" width="14" height="15" viewBox="0 0 14 15"><path d="M0 3.8 H14" stroke="#d4d4d4" stroke-width="1.7"/><path d="M4.3 2.4 C4.6 0.7 9.4 0.7 9.7 2.4" fill="none" stroke="#d4d4d4" stroke-width="1.7"/><path d="M2.9 4.4 V13.9 H11.1 V4.4" fill="none" stroke="#d4d4d4" stroke-width="1.8"/></svg>
<div class="t" style="left:1238.4px;top:617px;font-size:10.5px;color:#c6c6c6;letter-spacing:0.14px;">Use Cultural Speed...</div>
<div class="chk" style="left:1366.4px;top:614.4px"></div>
<svg class="abs" style="left:1366.4px;top:614.4px;" width="17" height="17" viewBox="0 0 17 17"><path d="M3.9 8.5 L7.4 11.9 L13.3 4.9" fill="none" stroke="#0f7ff0" stroke-width="2.4"/></svg>
<div class="dp" style="left:1208px;top:641px;width:360px;height:82px;border-radius:0;box-shadow:0 1px 3px rgba(0,0,0,.3)">
<div class="cat" style="top:0px"></div>
<div class="row" style="top:27px"></div>
<div class="row" style="top:54px"></div>
<div class="vd" style="left:143px;top:27px;height:54px"></div>
<div class="vd" style="left:337px;top:27px;height:54px"></div>
<div class="abs" style="left:0;right:0;bottom:0;height:2px;background:#171717"></div>
</div>
<svg class="abs" style="left:1213px;top:651px;" width="10" height="6.3" viewBox="0 0 10 6.3"><path d="M0 0 H10 L5 6.3 Z" fill="#8a8a8a"/></svg>
<div class="t" style="left:1230.3px;top:648px;font-size:10.5px;color:#d4d4d4;font-weight:700;letter-spacing:-0.11px;">Default</div>
<svg class="abs" style="left:1214.8px;top:676px;" width="6.6" height="10.2" viewBox="0 0 6.6 10.2"><path d="M0 0 L6.6 5.1 L0 10.2 Z" fill="#8a8a8a"/></svg>
<div class="t" style="left:1230.4px;top:675px;font-size:11px;color:#c6c6c6;letter-spacing:-0.09px;">Dialogue Widget Locat...</div>
<svg class="abs" style="left:1551.7px;top:675.8px;" width="12.6" height="10.5" viewBox="0 0 12 10"><path d="M4.5 0.9 L1 4.3 L4.5 7.7" fill="none" stroke="#c8c8c8" stroke-width="1.35" stroke-linecap="round" stroke-linejoin="round"/><path d="M1.4 4.3 H8.2 C10.2 4.3 11.3 5.4 11.3 6.8 C11.3 8.2 10.2 9.1 8.6 9.1 H7.6" fill="none" stroke="#c8c8c8" stroke-width="1.35" stroke-linecap="round"/></svg>
<div class="t" style="left:1230.4px;top:702px;font-size:11px;color:#c6c6c6;letter-spacing:-0.09px;">Snap to Current Speak...</div>
<div class="chk" style="left:1364.4px;top:699.4px"></div>
<div class="dp" style="left:1208px;top:726px;width:360px;height:55px;border-radius:0;box-shadow:0 1px 3px rgba(0,0,0,.3)">
<div class="cat" style="top:0px"></div>
<div class="row" style="top:27px"></div>
<div class="vd" style="left:143px;top:27px;height:27px"></div>
<div class="vd" style="left:337px;top:27px;height:27px"></div>
<div class="abs" style="left:0;right:0;bottom:0;height:2px;background:#171717"></div>
</div>
<svg class="abs" style="left:1213px;top:736px;" width="10" height="6.3" viewBox="0 0 10 6.3"><path d="M0 0 H10 L5 6.3 Z" fill="#8a8a8a"/></svg>
<div class="t" style="left:1230.3px;top:733px;font-size:10.5px;color:#d4d4d4;font-weight:700;letter-spacing:-0.11px;">Default</div>
<svg class="abs" style="left:1214.8px;top:761px;" width="6.6" height="10.2" viewBox="0 0 6.6 10.2"><path d="M0 0 L6.6 5.1 L0 10.2 Z" fill="#8a8a8a"/></svg>
<div class="t" style="left:1230.4px;top:760px;font-size:11px;color:#c6c6c6;letter-spacing:-0.09px;">Dialogue Widget Locat...</div>
<svg class="abs" style="left:1551.7px;top:760.8px;" width="12.6" height="10.5" viewBox="0 0 12 10"><path d="M4.5 0.9 L1 4.3 L4.5 7.7" fill="none" stroke="#c8c8c8" stroke-width="1.35" stroke-linecap="round" stroke-linejoin="round"/><path d="M1.4 4.3 H8.2 C10.2 4.3 11.3 5.4 11.3 6.8 C11.3 8.2 10.2 9.1 8.6 9.1 H7.6" fill="none" stroke="#c8c8c8" stroke-width="1.35" stroke-linecap="round"/></svg>
<div class="t" style="left:1152.4px;top:795px;font-size:12.5px;color:#ececec;letter-spacing:-0.09px;">Default</div>
<svg class="abs" style="left:1197.6px;top:797.6px;" width="9.6" height="6.8" viewBox="0 0 9.6 6.8"><path d="M1.2 1.2 L4.8 5.6 L8.4 1.2" fill="none" stroke="#111115" stroke-width="2" stroke-linecap="round" stroke-linejoin="round"/></svg>
<svg class="abs" style="left:1223px;top:793.8px;" width="16" height="15" viewBox="0 0 16 15"><path d="M1 14.2 L1.7 11.2 L8.3 4.6 L10.9 7.2 L4.3 13.8 Z" fill="none" stroke="#efefef" stroke-width="1.3" stroke-linejoin="round"/><path d="M7 3 L12.4 8.4" stroke="#efefef" stroke-width="2.2" stroke-linecap="round"/><path d="M10.2 5.2 L12.4 3" stroke="#efefef" stroke-width="3.8" stroke-linecap="round"/><circle cx="12.9" cy="2.8" r="2.5" fill="#efefef"/></svg>
<svg class="abs" style="left:1248.4px;top:792.8px;" width="17" height="17" viewBox="0 0 17 17"><circle cx="9.7" cy="7" r="6.15" fill="none" stroke="#efefef" stroke-width="1.35"/><circle cx="9.7" cy="7" r="4.2" fill="#9c9ca3"/><path d="M5.3 11.4 L1.5 15.2" stroke="#efefef" stroke-width="2.3" stroke-linecap="round"/></svg>
<div class="tb" style="left:1143px;top:816px;width:490px;height:46.5px"><i></i></div>
<div class="t" style="left:1152.4px;top:825px;font-size:13px;color:#d2d2d2;letter-spacing:-0.09px;">We can make dialogue with only text. This fits really well with the games with 2d or</div>
<div class="t" style="left:1152.4px;top:841px;font-size:13px;color:#d2d2d2;letter-spacing:0.05px;">retro visual concepts.</div>
<div class="dp" style="left:1209px;top:868px;width:358px;height:82px;border-radius:0;box-shadow:0 1px 3px rgba(0,0,0,.3)">
<div class="cat" style="top:0px"></div>
<div class="row" style="top:27px"></div>
<div class="row" style="top:54px"></div>
<div class="vd" style="left:142px;top:27px;height:54px"></div>
<div class="vd" style="left:335px;top:27px;height:54px"></div>
<div class="abs" style="left:0;right:0;bottom:0;height:2px;background:#171717"></div>
</div>
<svg class="abs" style="left:1214px;top:878px;" width="10" height="6.3" viewBox="0 0 10 6.3"><path d="M0 0 H10 L5 6.3 Z" fill="#8a8a8a"/></svg>
<div class="t" style="left:1231.3px;top:876px;font-size:10.5px;color:#d4d4d4;font-weight:700;letter-spacing:-0.08px;">Settings</div>
<div class="t" style="left:1231.4px;top:903px;font-size:11px;color:#c6c6c6;letter-spacing:0.1px;">Event Tag to Wait</div>
<div class="abs" style="left:1365px;top:900px;width:179px;height:18px;background:#575757;border-radius:4px 0 0 4px"></div>
<div class="t" style="left:1370.5px;top:903px;font-size:11px;color:#f0f0f0;letter-spacing:0.14px;">JointNative.Input.SkipAndSelect</div>
<svg class="abs" style="left:1537.8px;top:904.4px;" width="6.2" height="9.6" viewBox="0 0 6.2 9.6"><path d="M1.7 0.9 L6 4.8 L1.7 8.7" fill="none" stroke="#e6e6e6" stroke-width="1.5" stroke-linecap="round" stroke-linejoin="round"/></svg>
<div class="t" style="left:1231.4px;top:930px;font-size:11px;color:#c6c6c6;letter-spacing:0.05px;">Wait Until All Players...</div>
<div class="chk" style="left:1364.4px;top:926.4px"></div>
<div class="abs" style="left:946.5px;top:533.4px;width:185px;height:42px;background:#1a1a1a;border-radius:4.5px;border:1px solid #2b2b2b;"></div>
<div class="t" style="left:961.3px;top:541px;font-size:12px;color:#f0f0f0;letter-spacing:0.15px;">JointNative.Participant.Cube</div>
<div class="t" style="left:961.3px;top:560px;font-size:9px;color:#c0c0c0;letter-spacing:-0.06px;">Participant_Cube</div>
<svg class="abs" style="left:1033.8px;top:585.7px;" width="10.4" height="6.6" viewBox="0 0 10.4 6.6"><path d="M1.15 1.15 L5.2 5.449999999999999 L9.250000000000002 1.15" fill="none" stroke="#ffffff" stroke-width="1.9" stroke-linecap="round" stroke-linejoin="round"/></svg>
<div class="abs" style="left:946.5px;top:601.4px;width:185px;height:42px;background:#1a1a1a;border-radius:4.5px;border:1px solid #2b2b2b;"></div>
<div class="t" style="left:953.5px;top:609px;font-size:12px;color:#f0f0f0;letter-spacing:0.15px;">JointNative.Participant.Cylinder</div>
<div class="t" style="left:953.5px;top:628px;font-size:9px;color:#c0c0c0;">Participant_Cylinder</div>
</div></body></html>
